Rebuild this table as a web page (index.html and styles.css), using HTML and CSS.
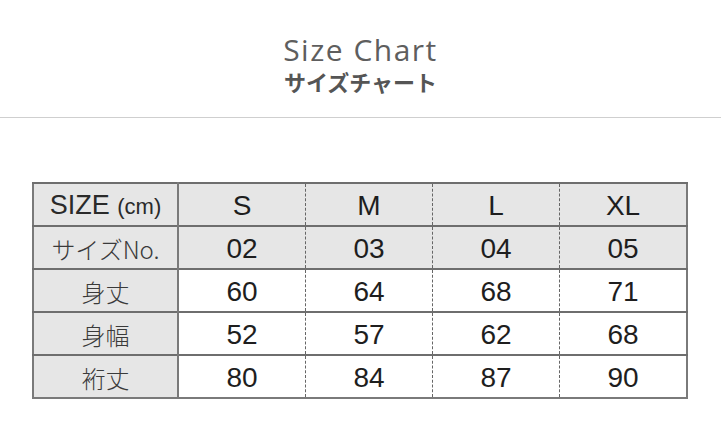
FILE: index.html
```html
<!DOCTYPE html>
<html lang="ja">
<head>
<meta charset="utf-8">
<link rel="stylesheet" href="styles.css">
</head>
<body>
<header class="head">
  <h1 class="title">Size Chart</h1>
  <p class="subtitle">サイズチャート</p>
</header>
<main class="wrap">
  <table class="chart">
    <tr class="hd">
      <th class="lab">SIZE <span class="unit">(cm)</span></th>
      <td>S</td><td>M</td><td>L</td><td>XL</td>
    </tr>
    <tr class="hd">
      <th class="lab jp">サイズNo.</th>
      <td>02</td><td>03</td><td>04</td><td>05</td>
    </tr>
    <tr>
      <th class="lab jp">身丈</th>
      <td>60</td><td>64</td><td>68</td><td>71</td>
    </tr>
    <tr>
      <th class="lab jp">身幅</th>
      <td>52</td><td>57</td><td>62</td><td>68</td>
    </tr>
    <tr>
      <th class="lab jp">裄丈</th>
      <td>80</td><td>84</td><td>87</td><td>90</td>
    </tr>
  </table>
</main>
</body>
</html>
```
FILE: styles.css
```css
html, body { margin: 0; padding: 0; background: #fff; }
body { font-family: "Liberation Sans", Arial, sans-serif; }
.head {
  text-align: center;
  border-bottom: 1px solid #cfcfcf;
  padding-top: 35px;
  height: 82px;
}
.title {
  margin: 0;
  font-family: "Open Sans", "Noto Sans", sans-serif;
  font-weight: 400;
  font-size: 30px;
  line-height: 30px;
  letter-spacing: 1.5px;
  color: #5e5e5e;
}
.subtitle {
  margin: 3px 0 0;
  font-family: "Noto Sans CJK JP", sans-serif;
  font-weight: 700;
  font-size: 22px;
  line-height: 26px;
  color: #555;
}
.wrap {
  padding-top: 64px;
  padding-left: 32px;
}
.chart {
  border-collapse: collapse;
  border: 2px solid #7a7a7a;
  table-layout: fixed;
}
.chart td, .chart th {
  height: 39px;
  padding: 2px 0 0;
  line-height: 30px;
  text-align: center;
  font-family: "Liberation Sans", Arial, sans-serif;
  font-weight: 400;
  font-size: 28px;
  color: #1e1e1e;
  border-top: 2px solid #6e6e6e;
  border-left: 1px dashed #666;
  width: 126px;
}
.chart .lab {
  width: 143px;
  background: #e6e6e6;
  border-right: 2px solid #7a7a7a;
  border-left: none;
  color: #2a2a2a;
  font-size: 27px;
}
.chart .unit { font-size: 22px; }
.chart .jp {
  font-family: "Noto Sans CJK JP", sans-serif;
  font-weight: 300;
  font-size: 24px;
  color: #3a3a3a;
}
.chart tr.hd td { background: #e6e6e6; }
.chart th + td { border-left: none; }
```
